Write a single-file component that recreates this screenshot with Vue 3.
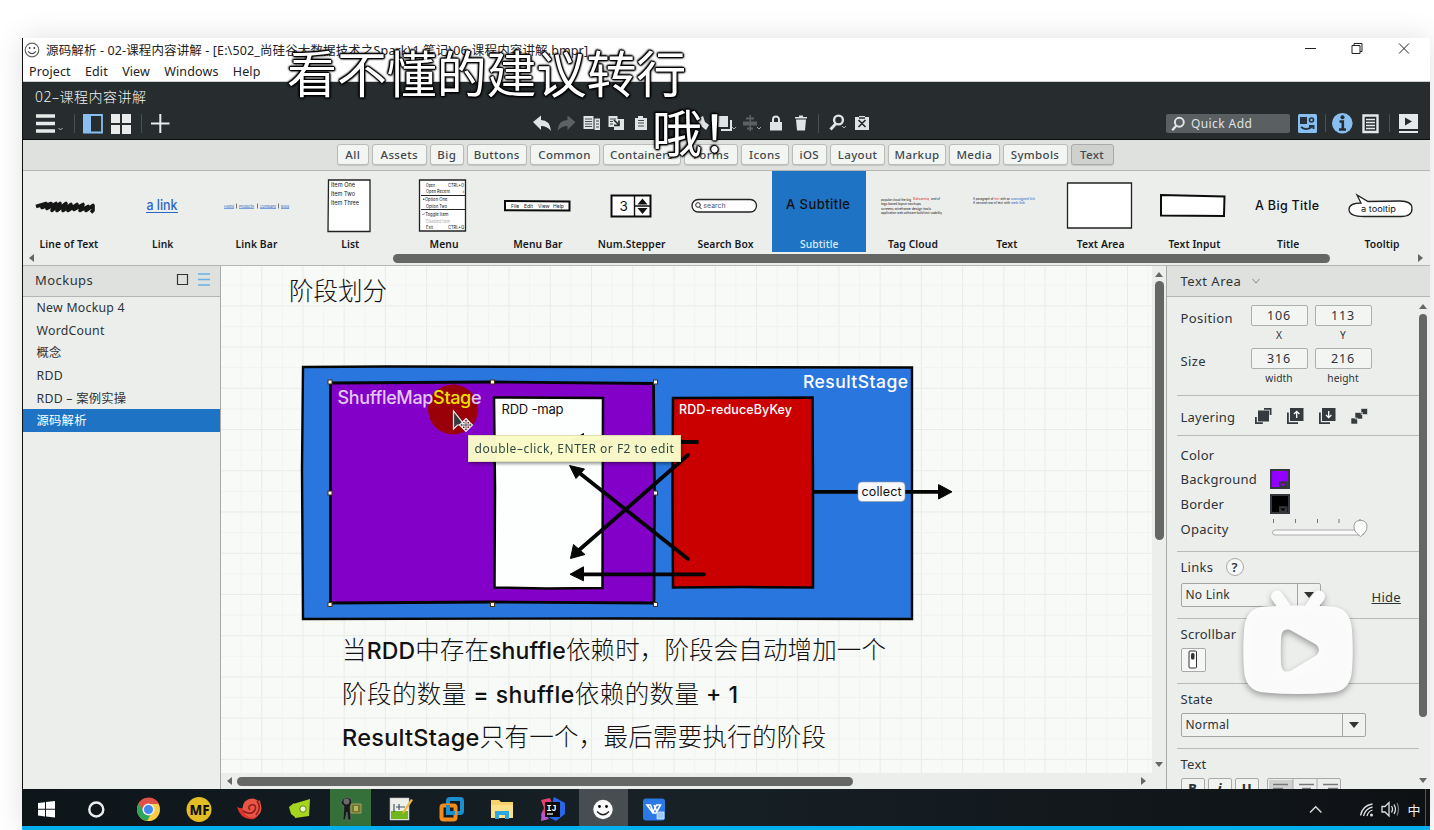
<script setup>
const menus = ['Project', 'Edit', 'View', 'Windows', 'Help']
const categories = [
  ['All', 32.5], ['Assets', 54.5], ['Big', 34.5], ['Buttons', 59.5], ['Common', 70], ['Containers', 78.5],
  ['Forms', 54], ['Icons', 47.5], ['iOS', 35.5], ['Layout', 55], ['Markup', 58], ['Media', 50.5],
  ['Symbols', 65], ['Text', 43],
]
const controls = ['Line of Text', 'Link', 'Link Bar', 'List', 'Menu', 'Menu Bar', 'Num.Stepper', 'Search Box',
  'Subtitle', 'Tag Cloud', 'Text', 'Text Area', 'Text Input', 'Title', 'Tooltip']
const mockups = ['New Mockup 4', 'WordCount', '概念', 'RDD', 'RDD – 案例实操', '源码解析']
const handles = [[330, 382], [492.5, 382], [655.5, 382], [330, 493], [655.5, 493], [330, 604.5], [492.5, 604.5], [655.5, 604.5]]
</script>

<template>
  <div class="page">
    <div class="window">
      <header class="titlebar">
        <svg class="face" viewBox="0 0 16 16"><circle cx="8" cy="8" r="6.8" fill="#fff" stroke="#666" stroke-width="1.2" /><circle cx="5.7" cy="6" r="1" fill="#444" /><circle cx="10.3" cy="6" r="1" fill="#444" /><path d="M4 9.3q4 4.6 8 0" fill="none" stroke="#444" stroke-width="1.1" /></svg>
        <svg class="caption" viewBox="0 0 560 24"><text x="0" y="16.500" textLength="542">源码解析 - 02-课程内容讲解 - [E:\502_尚硅谷大数据技术之Spark\1.笔记\06-课程内容讲解.bmpr]</text></svg>
        <svg class="winbtns" viewBox="1300 38 130 24" fill="none" stroke="#222" stroke-width="1"><path d="M1305 48.5h11M1352 45.500h8v8h-8zM1354 45.500v-2h8v8h-2M1399 43.500l10 10M1409 43.500l-10 10" /></svg>
      </header>
      <nav class="menubar"><span v-for="m in menus" :key="m">{{ m }}</span></nav>

      <section class="dark">
        <div class="doc">02–课程内容讲解</div>
        <div class="tools">
          <svg class="tleft" viewBox="22 110 160 30">
            <path d="M36 116h19M36 123.500h19M36 131h19" stroke="#e8ebea" stroke-width="3.600" />
            <path d="M58.500 128l2 2 2-2" stroke="#bbb" fill="none" />
            <path d="M74.500 114v19M141.500 114v19" stroke="#4b5052" />
            <path d="M84 115h18v17.500H84z" fill="#272c2f" stroke="#89bff0" stroke-width="1.800" /><path d="M83 114h8v19h-8z" fill="#89bff0" />
            <path d="M111 114h9v9h-9zM122 114h9v9h-9zM111 125h9v9h-9zM122 125h9v9h-9z" fill="#e8ebea" />
            <path d="M151 123.500h18.500M160.300 114v19" stroke="#e8ebea" stroke-width="2" />
          </svg>
          <svg class="tmid" viewBox="530 110 344 30">
            <g fill="#e0e4e4">
              <path d="M533 122l8-6.500v4.500q9 0 10 11-4-5-10-5v4z" />
              <path d="M575.500 122l-8-6.500v4.500q-9 0-10 11 4-5 10-5v4z" fill="#5c6163" />
              <path d="M583.500 116h10v13h-10zM594.500 118.500h5.500v11.500h-5.500z" />
              <path d="M608.500 116h9v3h6.500v11h-10v-3h-5.500z" />
              <path d="M635 118h3v-2h5v2h4v12h-12z" />
              <path d="M697 119l6-3 2 6 4 3-3 5-5-4z" />
              <path d="M718 116h10v11h-10z" />
              <path d="M721 129h9v-9h2v11h-11z" />
              <path d="M743 121.500h14v4h-14zM746 117.500h8v2h-8zM747 127.500h6v2h-6zM749.500 115h1.500v16h-1.500z" fill="#5c6163" />
              <path d="M770 122h12v8.500h-12z" />
              <path d="M796 119.500h10l-1 11h-8zM795 117h12v1.500h-12zM799 115.500h4v2h-4z" />
              <path d="M855 117h4v-1h6v1h4v13h-14z" />
            </g>
            <path d="M773 122v-2.500a3 3 0 0 1 6 0v2.500" fill="none" stroke="#e0e4e4" stroke-width="2" />
            <path d="M585 119h7M585 121.500h7M585 124h7M585 126.500h7M596 121h3M596 124h3M596 127h3M610 119h6M610 121.500h3M610 124h3M638 120.500h6M638 123h6M638 126h6" stroke="#353a3d" fill="none" stroke-width=".9" />
            <path d="M614 120l5 5M619 120.500v4.800h-5M858.500 120l7 7M865.500 120l-7 7M859 118h6" stroke="#272c2f" fill="none" stroke-width="1.700" />
            <circle cx="838.500" cy="120" r="4.400" fill="none" stroke="#e0e4e4" stroke-width="2.400" /><path d="M835.500 124l-5 5.500" stroke="#e0e4e4" stroke-width="3" />
            <path d="M732 127l2 2 2-2M757 127l2 2 2-2M842 126l2 2 2-2" fill="none" stroke="#aaa" />
            <path d="M818.500 114v19" stroke="#4b5052" />
          </svg>
          <div class="quick">
            <svg viewBox="0 0 18 18"><circle cx="10.500" cy="7" r="5" fill="none" stroke="#e3e6e6" stroke-width="2.200" /><path d="M7 11l-4.500 5" stroke="#e3e6e6" stroke-width="2.600" /></svg>
            <span>Quick Add</span>
          </div>
          <svg class="tright" viewBox="1296 110 134 30">
            <rect x="1298" y="114" width="19" height="19" rx="1.500" fill="#89bff0" /><path d="M1300 117h7v7h-7z" fill="#26333f" /><circle cx="1311.500" cy="120" r="2" fill="none" stroke="#26333f" stroke-width="1.600" /><path d="M1301 127q6 4.500 11-.5M1309 126h4.500v3" fill="none" stroke="#26333f" stroke-width="1.900" />
            <path d="M1325.500 114v18M1389.500 114v18" stroke="#4b5052" />
            <circle cx="1342.300" cy="123.300" r="10.300" fill="#89bff0" /><path d="M1339.500 121.500h3.300v7.500M1339 129.500h7" stroke="#272c2f" stroke-width="2.600" fill="none" /><circle cx="1342.500" cy="117.300" r="2" fill="#272c2f" />
            <path d="M1363.500 115.500h14v16.500h-14z" fill="none" stroke="#e6e9e9" stroke-width="2.400" /><path d="M1366 119.500h9M1366 122.500h9M1366 125.500h9M1366 128.500h9" stroke="#e6e9e9" stroke-width="1.500" />
            <path d="M1399 114h19v15h-19zM1399 131h19v2h-19z" fill="#e6e9e9" /><path d="M1405 117.500v8l7-4z" fill="#272c2f" />
          </svg>
        </div>
      </section>

      <section class="cats">
        <span v-for="c in categories" :key="c[0]" class="cat" :class="{ on: c[0] === 'Text' }" :style="{ width: c[1] + 'px' }">{{ c[0] }}</span>
      </section>

      <section class="library">
        <div class="items">
          <div v-for="(c, i) in controls" :key="c" class="item" :class="{ sel: i === 8 }">
            <svg class="thumb" viewBox="0 0 94 66">
              <template v-if="i === 0">
                <path d="M14 35.500l10-3-4 4 9-4-4 5 9-5-4 7 8-7-3 7 9-7-3 7 8-6-3 6 9-6-3 5 9-5-3 6 8-4-2 4 7-5v5l-2 2" fill="none" stroke="#161616" stroke-width="3.600" stroke-linejoin="round" />
              </template>
              <template v-else-if="i === 1"><text x="30.500" y="39" font-size="14" font-weight="500" fill="#2a65c4" textLength="31" lengthAdjust="spacingAndGlyphs">a link</text><path d="M30 41.500h32" stroke="#2a65c4" /></template>
              <template v-else-if="i === 2"><g class="tiny"><text x="14" y="36.500" textLength="10" lengthAdjust="spacingAndGlyphs">Home</text><text x="29" y="36.500" textLength="15" lengthAdjust="spacingAndGlyphs">Products</text><text x="50" y="36.500" textLength="16" lengthAdjust="spacingAndGlyphs">Company</text><text x="71" y="36.500" textLength="8" lengthAdjust="spacingAndGlyphs">Blog</text></g><path d="M26.500 32.500v5M47.500 32.500v5M68.500 32.500v5" stroke="#555" stroke-width=".8" /><path d="M14 37.500h10M29 37.500h15M50 37.500h16M71 37.500h8" stroke="#5d8bd3" stroke-width=".8" /></template>
              <template v-else-if="i === 3"><path d="M25.500 9h41.500v51.500h-42z" class="box" /><g font-size="6.200"><text x="28" y="16" textLength="24" lengthAdjust="spacingAndGlyphs">Item One</text><text x="28" y="25" textLength="24" lengthAdjust="spacingAndGlyphs">Item Two</text><text x="28" y="34" textLength="28" lengthAdjust="spacingAndGlyphs">Item Three</text></g></template>
              <template v-else-if="i === 4"><path d="M22.500 9h46v51h-46z" class="box" /><g font-size="4.700"><text x="29" y="15.500" textLength="9" lengthAdjust="spacingAndGlyphs">Open</text><text x="51" y="15.500" textLength="16" lengthAdjust="spacingAndGlyphs">CTRL+O</text><text x="29" y="22" textLength="24" lengthAdjust="spacingAndGlyphs">Open Recent</text><text x="65.500" y="22">›</text><text x="25.500" y="30" textLength="25" lengthAdjust="spacingAndGlyphs">•Option One</text><text x="29" y="36.500" textLength="21" lengthAdjust="spacingAndGlyphs">Option Two</text><text x="24.500" y="45" textLength="27" lengthAdjust="spacingAndGlyphs">✓Toggle Item</text><text x="29" y="51.500" fill="#aaa" textLength="24" lengthAdjust="spacingAndGlyphs">Disabled Item</text><text x="29" y="58" textLength="7" lengthAdjust="spacingAndGlyphs">Exit</text><text x="51" y="58" textLength="16" lengthAdjust="spacingAndGlyphs">CTRL+Q</text></g><path d="M24 24.500h44M24 38.500h44" stroke="#222" /></template>
              <template v-else-if="i === 5"><path d="M14 30l64.500 .5v9l-64.500-.3z" class="box heavy" /><g font-size="5"><text x="20" y="37">File</text><text x="33" y="37">Edit</text><text x="47" y="37">View</text><text x="62" y="37">Help</text></g></template>
              <template v-else-if="i === 6"><path d="M26.500 24.500h39v21h-39z" class="box heavy" /><path d="M49.500 24v22M49.500 35h16" stroke="#111" stroke-width="1.400" /><path d="M52.500 33.500l5-6 5 6zM52.500 37l5 6 5-6z" fill="#111" /><text x="34.500" y="40" font-size="13.500">3</text></template>
              <template v-else-if="i === 7"><rect x="14" y="28.500" width="64.500" height="12.500" rx="6.200" class="box" /><circle cx="20" cy="34" r="2.300" fill="none" stroke="#222" /><path d="M21.500 36l2 2" stroke="#222" /><text x="25.500" y="37" font-size="6.800" fill="#555" textLength="22" lengthAdjust="spacingAndGlyphs">search</text></template>
              <template v-else-if="i === 8"><text x="14" y="38" font-size="13" font-weight="500" textLength="64">A Subtitle</text></template>
              <template v-else-if="i === 9"><g font-size="3.400"><text x="15" y="29.500" textLength="30" lengthAdjust="spacingAndGlyphs">popular cloud the big</text><text x="47" y="29" fill="#d33" textLength="16" lengthAdjust="spacingAndGlyphs">Balsamiq</text><text x="65" y="29" textLength="9" lengthAdjust="spacingAndGlyphs">and of</text><text x="15" y="34" textLength="40" lengthAdjust="spacingAndGlyphs">tags based layout mockups</text><text x="15" y="38.500" textLength="50" lengthAdjust="spacingAndGlyphs">screens wireframe design tools</text><text x="15" y="43" textLength="61" lengthAdjust="spacingAndGlyphs">application web software build text usability</text></g></template>
              <template v-else-if="i === 10"><g font-size="3.200"><text x="13" y="29" textLength="37" lengthAdjust="spacingAndGlyphs">A paragraph of <tspan fill="#d33">text</tspan> with an</text><text x="51" y="29" fill="#2a65c4" textLength="24" lengthAdjust="spacingAndGlyphs">unassigned link</text><text x="13" y="33" textLength="37" lengthAdjust="spacingAndGlyphs">A second row of text with</text><text x="51" y="33" fill="#2a65c4" textLength="14" lengthAdjust="spacingAndGlyphs">web link</text></g></template>
              <template v-else-if="i === 11"><path d="M13.500 12h64v45h-64z" class="box" /></template>
              <template v-else-if="i === 12"><path d="M14 24l63.500 1.500-.5 19.500-63-.5z" class="box heavy" /></template>
              <template v-else-if="i === 13"><text x="14" y="39" font-size="12.500" font-weight="500" textLength="64">A Big Title</text></template>
              <template v-else><path d="M26 32c-8 0-12 2-12 6.500 0 6 8 7 15 7h37c7 0 11-2 11-8 0-6-5-7.500-12-7.500l-32 .5-11-6.500z" class="box" /><text x="26" y="40.500" font-size="8" textLength="35" lengthAdjust="spacingAndGlyphs">a tooltip</text></template>
            </svg>
            <span class="label">{{ c }}</span>
          </div>
        </div>
        <div class="libscroll"><i class="al"></i><b></b><i class="ar"></i></div>
      </section>

      <main class="main">
        <aside class="left">
          <div class="lhead"><span>Mockups</span>
            <svg viewBox="0 0 36 16"><path d="M1.500 2.500h10v10h-10z" fill="none" stroke="#333" stroke-width="1.200" /><path d="M22 2h12M22 7.500h12M22 13h12" stroke="#6aaee6" stroke-width="1.400" /></svg>
          </div>
          <div v-for="(m, i) in mockups" :key="m" class="mock" :class="{ active: i === 5 }">{{ m }}</div>
        </aside>

        <section class="canvas">
          <div class="canvasrow">
            <svg class="board" viewBox="221 266 931 507">
              <defs><pattern id="grid" patternUnits="userSpaceOnUse" x="261.200" y="387.800" width="41.230" height="41.230"><path d="M.5 0v41.230M0 .5h41.230" stroke="#e9ebe9" /><path d="M21 0v41.230M0 21h41.230" stroke="#f1f3f1" /></pattern></defs>
              <rect x="221" y="266" width="931" height="507" fill="#f8faf8" /><rect x="221" y="266" width="931" height="507" fill="url(#grid)" />
              <text class="serif" x="289" y="300" font-size="24.500" textLength="98">阶段划分</text>
              <path d="M303 367l85-.5 524 1v251.500l-300-.5-309 .5-1-150z" fill="#2a76df" stroke="#050505" stroke-width="2.400" />
              <path d="M330.500 383l160-1 163 1.500 1 110-.5 109.500-163-1-160.500 1v-110z" fill="#8200c8" stroke="#050505" stroke-width="2.800" />
              <circle cx="453" cy="409.500" r="25" fill="#990007" />
              <text x="337.500" y="404" font-size="18" fill="#e3c7f2" textLength="144">ShuffleMap<tspan fill="#ede000">Stag</tspan>e</text>
              <path d="M494 397.500l109 .5-.5 190-56 .5-52-1 .5-100z" fill="#fdfefe" stroke="#050505" stroke-width="2.500" />
              <text x="501.500" y="414" font-size="13" class="reg" textLength="62">RDD -map</text>
              <path d="M673 398l139.500-.5.500 90v100l-70-.5-70 .5-.5-100z" fill="#ca0000" stroke="#050505" stroke-width="2.500" />
              <text x="679" y="414" font-size="12.500" fill="#fff" textLength="113">RDD-reduceByKey</text>
              <text x="803" y="387.500" font-size="17.500" fill="#fff" textLength="105">ResultStage</text>
              <g stroke="#050505" stroke-width="3.800" stroke-linecap="round"><path d="M580 442h117M688 455L578 551M688 559L577 471M584 574.300h120M814 491.800h126" /></g>
              <path d="M570.500 441.500l13-8v14zM569.500 465.500l15 3.500-8.500 9.500zM570.500 558.500l3-14 11.500 10zM570 574.300l13.500-7.500v14zM952 491.800l-13.500-7.200v14.400z" fill="#050505" stroke="#050505" stroke-linejoin="round" />
              <rect x="858" y="482" width="47" height="19.500" rx="4" fill="#f7f9ff" stroke="#9a9a9a" stroke-width=".6" /><text x="861.500" y="496" font-size="12.500" class="reg" textLength="40">collect</text>
              <rect v-for="(h, i) in handles" :key="i" :x="h[0] - 2" :y="h[1] - 2" width="4" height="4" fill="#fff" stroke="#4a3010" />
              <path d="M453.500 411v18l4-4h7z" fill="#343a40" stroke="#eee" stroke-width="1.200" /><path d="M466 418.500l3 3h-2v2.500h2.500v-2l3 3-3 3v-2H467v2.500h2l-3 3-3-3h2V426h-2.500v2l-3-3 3-3v2h2.500v-2.500h-2z" fill="#555" stroke="#eee" stroke-width="1.100" />
              <g class="mix" font-size="24.500">
                <text x="342" y="659" textLength="544">当<tspan class="lat">RDD</tspan>中存在<tspan class="lat">shuffle</tspan>依赖时，阶段会自动增加一个</text>
                <text x="342" y="703" textLength="396">阶段的数量<tspan class="lat"> = shuffle</tspan>依赖的数量<tspan class="lat"> + 1</tspan></text>
                <text x="342" y="745.500" textLength="484"><tspan class="lat wide">ResultStage</tspan>只有一个，最后需要执行的阶段</text>
              </g>
            </svg>
            <div class="vscroll"><i class="au"></i><b></b><i class="ad"></i></div>
            <div class="tip">double–click, ENTER or F2 to edit</div>
          </div>
          <div class="hscroll"><i class="al"></i><b></b><i class="ar"></i></div>
        </section>

        <aside class="props">
          <div class="phead">Text Area <svg viewBox="0 0 10 8"><path d="M1.500 2l3.500 4 3.500-4" fill="none" stroke="#888" /></svg></div>
          <div class="pbody">
            <div class="sheet">
              <div class="dims"><label>Position</label><div class="dim"><span class="inp">106</span><small>X</small></div><div class="dim"><span class="inp">113</span><small>Y</small></div></div>
              <div class="dims second"><label>Size</label><div class="dim"><span class="inp">316</span><small>width</small></div><div class="dim"><span class="inp">216</span><small>height</small></div></div>
              <div class="row sep layering"><label>Layering</label>
                <svg viewBox="1254 407 114 20" fill="#343a3e"><path d="M1258 410.500h11v11h-11zM1264 408h7.500v7h-1.800v-5.200H1264zM1255 417h1.800v5.200h6v1.800H1255z" /><path d="M1290 408h13.500v13H1290zM1287 412.500h1.800v9.700h9.200v1.800h-11zM1322 408h13.500v13H1322zM1319 412.500h1.800v9.700h9.200v1.800h-11z" /><path d="M1296.700 418v-6.500M1294 414l2.700-2.700 2.700 2.700M1328.700 411v6.500M1326 415l2.700 2.700 2.700-2.700" fill="none" stroke="#fff" stroke-width="1.300" /><path d="M1351 418h6.500v6H1351zM1355 412.500h7.500v6.500H1355zM1361 408.500h6.500v6H1361z" stroke="#eceeec" stroke-width=".6" /></svg>
              </div>
              <div class="row sep color"><label>Color</label></div>
              <div class="row r25"><label>Background</label><span class="sw purple"><em></em></span></div>
              <div class="row r25"><label>Border</label><span class="sw"><em></em></span></div>
              <div class="row r25"><label>Opacity</label><svg class="slider" viewBox="1268 515 100 26"><path d="M1273.500 518v4M1295.500 518v4M1317.500 518v4M1339 518v4M1360 518v4" stroke="#777" /><rect x="1272.500" y="529" width="92" height="5" rx="2.500" fill="#fafafa" stroke="#aaa" /><path d="M1360.500 519.500c4 0 6.500 2 6.500 6 0 5-3 7-6.500 10-3.500-3-6.500-5-6.500-10 0-4 2.500-6 6.500-6z" fill="#fbfbfb" stroke="#999" /></svg></div>
              <div class="row sep links"><label>Links</label><span class="help">?</span></div>
              <div class="row linkrow"><div class="combo c1"><span>No Link</span><i></i></div><a>Hide</a></div>
              <div class="row sep sbl"><label>Scrollbar</label></div>
              <div class="row sbrow"><span class="sbtn"><svg viewBox="0 0 10 20"><rect x="1" y="1" width="7.500" height="17" rx="1" fill="#fff" stroke="#333" /><rect x="3" y="3" width="3.500" height="6.500" rx="1.500" fill="#333" /></svg></span></div>
              <div class="row sep sbl"><label>State</label></div>
              <div class="row staterow"><div class="combo c2"><span>Normal</span><i></i></div></div>
              <div class="row sep sbl textl"><label>Text</label></div>
              <div class="row fmt"><span>B</span><span class="it">i</span><span>U</span><div class="aligns"><svg viewBox="0 0 74 22"><path d="M1 1h24v22H1z" fill="#cfd1cf" /><path d="M25 0v22M49 0v22" stroke="#aaa" /><path d="M5 5.500h15M5 9.500h10M31 5.500h15M34 9.500h9M55 5.500h15M60 9.500h10" stroke="#777" stroke-width="1.600" /></svg></div></div>
            </div>
            <div class="pscroll"><i class="au"></i><b></b><i class="ad"></i></div>
          </div>
        </aside>
      </main>

      <footer class="taskbar">
        <svg viewBox="22 789 1408 37">
          <defs><linearGradient id="tb"><stop offset="0" stop-color="#0d1519" /><stop offset=".45" stop-color="#172126" /><stop offset="1" stop-color="#0e1114" /></linearGradient></defs>
          <path d="M22 789h1408v37H22z" fill="url(#tb)" />
          <path d="M330 789h41v37h-41z" fill="#35703a" /><path d="M579 789h49v37h-49z" fill="#474d50" />
          <path d="M38 803l7-.8v6.500h-7zM46 802l9-1v7.700h-9zM38 809.800h7v6.600l-7-.8zM46 809.800h9v7.700l-9-1z" fill="#fff" />
          <circle cx="96.300" cy="809.500" r="7" fill="none" stroke="#eee" stroke-width="2.400" />
          <circle cx="148.500" cy="809.500" r="11.500" fill="#f9cc45" /><path d="M138.500 803.700a11.500 11.500 0 0 0 8.500 17.200l5.500-9.400-4-2z" fill="#2ca45b" /><path d="M138.500 803.700a11.500 11.500 0 0 1 20.500 .3h-10.500q-5 1-5.500 6z" fill="#df5146" /><circle cx="148.500" cy="809.500" r="5.300" fill="#4286ef" stroke="#eee" stroke-width="1.500" />
          <circle cx="199" cy="809.500" r="12.500" fill="#e3bd26" /><text x="189.500" y="815" font-size="14.500" font-weight="800" fill="#111" textLength="20" lengthAdjust="spacingAndGlyphs">MF</text>
          <path d="M237 807q6 3 11-1l12-6q3 14-6 19-13 2-17-12z" fill="#d8352e" /><circle cx="252" cy="808" r="9.500" fill="#e85545" /><path d="M243 811q8 5 12-1 2-6-4-5-4 2-1 5M257 801q5 7-1 14" fill="none" stroke="#8c1f1c" stroke-width="1.500" />
          <path d="M289 807l5-4 1 14-4-3zM293 804l17-5-1 17-14 2z" fill="#a6d51d" /><circle cx="303" cy="809" r="3.200" fill="#eff8d0" stroke="#5f8715" />
          <path d="M343 799q4-3 8 0l1 5-2 3 1 13h-3l-1-8-2 8h-2l1-14-3-3z" fill="#17191a" stroke="#6d7470" stroke-width=".6" /><circle cx="346.500" cy="801.500" r="3" fill="#666c6a" /><path d="M351 804h10v9h-10z" fill="#70742f" stroke="#a3a35e" /><path d="M354 806h4v5h-4z" fill="#b4b65c" />
          <path d="M390 798h19v22h-19z" fill="#edf0e8" stroke="#bbb" stroke-width=".6" /><path d="M391 811h17v8h-17z" fill="#71b51f" /><path d="M394 804v8M396 807h9M399 804v6" stroke="#456" stroke-width="1.200" /><path d="M411 799l-8 12-1 3 3-2 8-12z" fill="#f2b73a" />
          <g fill="none" stroke-width="4"><rect x="448" y="799" width="14" height="14" rx="2" stroke="#1c90cf" /><rect x="441.500" y="805.500" width="14" height="14" rx="2" stroke="#f08b1c" /><path d="M448 805v8h7" stroke="#1c90cf" /></g>
          <path d="M491 800h8l2 2h12v16h-22z" fill="#f6d36d" /><path d="M491 805h22v13h-22z" fill="#fce18b" /><path d="M495 811h14v8h-4v-4h-6v4h-4z" fill="#2da7df" />
          <path d="M541 800l9-2 4 10-8 12-5-5 3-7z" fill="#e54072" /><path d="M554 797l11 6v11l-9 7-8-4z" fill="#2a66e8" /><path d="M542 811l7 8-8 2z" fill="#b458cc" /><path d="M545 802h15v15h-15z" fill="#090909" /><text x="546.500" y="810.500" font-size="8.500" font-weight="700" fill="#fff" class="mono">IJ</text><path d="M547 814h6" stroke="#fff" stroke-width="1.200" />
          <circle cx="603" cy="809.500" r="9.700" fill="#fafafa" /><circle cx="599.500" cy="806.500" r="1.400" /><circle cx="606.500" cy="806.500" r="1.400" /><path d="M597 811.500q6 6.500 12 0" fill="none" stroke="#222" stroke-width="1.300" />
          <rect x="643" y="798.500" width="22" height="22" rx="3" fill="#2b79e5" /><path d="M647 805h3.500l2.500 7 3.500-7h4l-4.500 8h-3zM654 805l3 7" fill="none" stroke="#fff" stroke-width="1.600" /><path d="M657 812h7v7h-7z" fill="#9ec6fa" stroke="#e0eeff" stroke-width=".7" />
          <path d="M1310 812.500l5.700-5.700 5.700 5.700" fill="none" stroke="#ddd" stroke-width="1.400" />
          <g fill="none" stroke="#ddd" stroke-width="1.300"><path d="M1360.500 815.500q2-10 12-11.500M1363.500 816q2-7.500 9-9M1367 816q1-4.500 5.500-6" /><path d="M1382 806.500h3l4-4v13.500l-4-4h-3zM1391.500 806q2 3 0 6.500M1394 804.500q3 5 0 9.500" /><path d="M1397 803q3 6 0 12.500" stroke="#777" /></g><circle cx="1371.500" cy="815" r="1.500" fill="#ddd" />
          <text x="1407.500" y="814.500" font-size="13" fill="#eee" class="cjk">中</text><path d="M1425.500 789v37" stroke="#555" />
        </svg>
      </footer>
      <div class="progress"></div>
    </div>

    <div class="danmaku d1">看不懂的建议转行</div>
    <div class="danmaku d2">哦！</div>
    <svg class="tv" viewBox="1234 582 130 126">
      <defs><mask id="hole"><path d="M1230 570h140v140h-140z" fill="#fff" /><path d="M1284 630.500q4-2 8 .5l24 13.500q6 5.500 0 11l-24 14.500q-4 2.500-8 1-2.500-2-3-7-.5-13 0-26 .5-6 3-7.500z" fill="#000" /></mask></defs>
      <g fill="#fcfcfc" opacity=".98" mask="url(#hole)"><path d="M1277 596.500l8 11M1319 596.500l-8 11" stroke="#fcfcfc" stroke-width="12" stroke-linecap="round" /><path d="M1265 606.500q33-2 66 0 20 1 21 24 1.500 20 0 39-1 22-21 23-33 3-66 0-20-1-21-23-1.500-19 0-39 1-23 21-24z" /></g>
    </svg>
  </div>
</template>

<style>
html, body { margin: 0; overflow: hidden; background: #fdfdfd; }
</style>
<style scoped>
* { box-sizing: border-box; }
.page { position: relative; width: 1434px; height: 830px; padding: 38px 4px 0 22px; background: #fff; font-family: "Noto Sans", "Noto Sans CJK SC", sans-serif; color: #2d3438; overflow: hidden; font-size: 13px; }
.window { width: 1408px; height: 792px; display: flex; flex-direction: column; box-shadow: 0 0 28px rgba(0,0,0,.12); background: #eceeec; border-left: 1px solid #111; }
svg { display: block; flex: none; overflow: hidden; }
.titlebar { height: 24px; background: #fefffe; display: flex; align-items: center; flex: none; }
.face { width: 16px; height: 16px; margin-left: 1px; }
.caption { width: 560px; height: 24px; margin-left: 6px; font: 12.5px "Noto Sans", "Noto Sans CJK SC", sans-serif; fill: #222; }
.winbtns { width: 130px; height: 24px; margin-left: auto; }
.menubar { height: 20px; flex: none; background: #fefffe; display: flex; gap: 14.300px; padding-left: 6px; line-height: 20px; font-size: 12.5px; color: #222; letter-spacing: .12px; border-bottom: 1px solid #ccc; }
.dark { height: 58px; flex: none; background: #272c2f; border-bottom: 1px solid #0b0c0d; }
.doc { height: 28px; padding-left: 12px; line-height: 30px; font-size: 14px; font-weight: 300; letter-spacing: .5px; color: #f0f2f2; }
.tools { display: flex; height: 30px; align-items: flex-start; }
.tleft { width: 160px; height: 30px; margin-left: -1px; }
.tmid { width: 344px; height: 30px; margin-left: 348px; }
.quick { width: 124px; height: 19px; margin: 4px 6px 0 292px; background: #5a5f62; border-radius: 2px; color: #dfe3e3; display: flex; align-items: center; gap: 5px; padding-left: 4px; font-size: 12px; letter-spacing: .4px; }
.quick svg { width: 16px; height: 16px; }
.tright { width: 134px; height: 30px; }
.cats { height: 31px; flex: none; display: flex; gap: 3px; padding: 4px 0 0 313.500px; background: #dfe1df; border-bottom: 1px solid #b4b6b4; }
.cat { height: 21px; flex: none; line-height: 20px; text-align: center; border: 1px solid #babcba; border-radius: 3px; background: #f3f5f3; box-shadow: 0 1px 1px #c3c5c3; font-size: 11.500px; font-weight: 500; color: #41494e; letter-spacing: .35px; white-space: nowrap; }
.cat.on { background: #cfd1cf; border-color: #aaa; }
.library { height: 95px; flex: none; border-bottom: 1px solid #b4b6b4; background: #eceeec; }
.items { display: grid; grid-template-columns: repeat(15, 93.800px); height: 80px; margin-left: -1px; }
.item { display: flex; flex-direction: column; align-items: center; }
.item.sel { background: #1f73c4; }
.thumb { width: 94px; height: 66px; font-family: Inter, sans-serif; fill: #111; }
.box { fill: #fff; stroke: #222; stroke-width: 1.300px; }
.heavy { stroke: #0c0c0c; stroke-width: 2px; }
.tiny { font-size: 4px; fill: #2a65c4; }
.label { font-size: 10.300px; font-weight: 600; line-height: 15px; letter-spacing: .1px; color: #15191c; white-space: nowrap; }
.sel .label { color: #dceaf7; font-weight: 500; }
.libscroll { height: 14px; display: flex; align-items: center; padding: 0 7px 0 6px; justify-content: space-between; }
.libscroll b { width: 937px; height: 9px; border-radius: 5px; background: #656765; margin-left: 359px; margin-right: auto; }
i { display: block; width: 0; height: 0; flex: none; }
.al { border: 4px solid transparent; border-right: 5px solid #666; border-left: 0; }
.ar { border: 4px solid transparent; border-left: 5px solid #666; border-right: 0; }
.au { border: 4px solid transparent; border-bottom: 5px solid #666; border-top: 0; }
.ad { border: 4px solid transparent; border-top: 5px solid #666; border-bottom: 0; }
.main { height: 523px; flex: none; display: flex; }
.left { width: 198px; border-right: 1px solid #aaa; background: #eceeec; }
.lhead { height: 31px; margin-bottom: -1px; background: #dfe1df; border-bottom: 1px solid #b4b6b4; display: flex; align-items: center; justify-content: space-between; padding: 0 8px 2px 12px; font-size: 13px; letter-spacing: .45px; }
.lhead svg { width: 36px; height: 16px; }
.mock { height: 22.700px; line-height: 23px; padding-left: 13.500px; font-size: 12.300px; letter-spacing: .25px; }
.mock.active { background: #1f73c4; color: #fff; }
.canvas { width: 945px; display: flex; flex-direction: column; }
.canvasrow { position: relative; display: flex; height: 507px; }
.board { width: 931px; height: 507px; font-family: Inter, "Noto Sans CJK SC", sans-serif; font-weight: 500; fill: #111; }
.reg { font-weight: 400; }
.serif { font-family: "Noto Sans CJK SC"; font-weight: 300; }
.mix { font-family: "Noto Sans CJK SC"; font-weight: 300; }
.lat { font-family: Inter, sans-serif; font-size: 23px; font-weight: 500; }
.wide { font-size: 23.500px; }
.vscroll { width: 14px; background: #eceeec; display: flex; flex-direction: column; align-items: center; padding: 6px 0; }
.vscroll b { width: 9px; height: 259px; border-radius: 5px; background: #656765; margin: 4px 0 auto; }
.hscroll { height: 16px; background: #eceeec; display: flex; align-items: center; padding: 0 20px 0 6px; }
.hscroll b { width: 616px; height: 9px; border-radius: 5px; background: #656765; margin: 0 auto 0 5px; }
.tip { position: absolute; left: 247px; top: 169px; width: 213px; height: 27px; line-height: 25px; text-align: center; background: #fafbc8; color: #2f4a42; border: 1px solid #e0e0b0; box-shadow: 1px 2px 3px rgba(0,0,0,.4); font-size: 12px; letter-spacing: .5px; white-space: nowrap; opacity: .98; }
.props { width: 264px; border-left: 1px solid #aaa; background: #eceeec; overflow: hidden; }
.phead { height: 31px; background: #dfe1df; border-bottom: 1px solid #b4b6b4; padding: 0 0 1px 13.500px; font-size: 13px; letter-spacing: .5px; display: flex; align-items: center; gap: 10px; }
.phead svg { width: 10px; height: 8px; }
.pbody { display: flex; height: 492px; }
.sheet { width: 252px; height: 492px; overflow: hidden; padding-left: 10px; }
.pscroll { width: 8px; display: flex; flex-direction: column; align-items: center; padding: 7px 0 6px; }
.pscroll b { width: 8px; flex: none; height: 403px; border-radius: 5px; background: #656765; margin: 5px 0 auto; }
.dims { display: flex; height: 43px; padding: 8px 0 0 3.500px; gap: 7px; }
.dims label { width: 63px; padding-top: 4px; letter-spacing: .4px; }
.dims.second { height: 55px; }
.dim { width: 57px; text-align: center; }
.inp { display: block; height: 21px; line-height: 19px; border: 1px solid #aeb0ae; border-radius: 2px; background: #f3f5f3; font-size: 12.500px; letter-spacing: .8px; }
.dim small { display: block; font-size: 10.200px; line-height: 18px; letter-spacing: .1px; }
.row { display: flex; align-items: center; padding-left: 3.500px; letter-spacing: .25px; }
.row label { flex: none; width: 70px; }
.sep { border-top: 1px solid #b9bbb9; }
.layering { height: 40px; padding-top: 2px; }
.layering svg { width: 114px; height: 20px; margin-left: 3.500px; }
.color { height: 32px; padding-top: 7px; }
.r25 { height: 24.800px; }
.r25 label { width: 89px; }
.sw { width: 20px; height: 20px; background: #000; border: 2px solid #34383c; display: flex; align-items: flex-end; justify-content: flex-end; }
.sw em { width: 9px; height: 6px; background: #34383c; clip-path: polygon(0 0, 100% 0, 100% 100%, 0 100%, 0 30%, 20% 40%, 50% 80%, 80% 40%, 0 40%); }
.sw.purple { background: #9300ff; }
.slider { width: 100px; height: 26px; margin-left: -1.500px; }
.links { height: 32px; margin-top: 9.500px; }
.links label { width: 45px; }
.help { width: 18px; height: 18px; border: 1px solid #aaa; border-radius: 50%; background: #f7f7f7; text-align: center; line-height: 16px; font-weight: 600; }
.linkrow { height: 35.500px; align-items: flex-start; }
.combo { display: flex; height: 24px; border: 1px solid #a4a6a4; background: #f0f2f0; border-radius: 2px; font-size: 12px; line-height: 22px; justify-content: space-between; align-items: center; }
.combo span { padding-left: 4px; flex: 1; border-right: 1px solid #a4a6a4; }
.combo i { border: 5px solid transparent; border-top: 6px solid #333; border-bottom: 0; margin: 0 6px; }
.c1 { width: 140px; }
.c2 { width: 185px; }
.linkrow a { text-decoration: underline; margin: 5px 0 0 51px; }
.sbl { height: 30px; }
.sbrow { height: 35px; align-items: flex-start; }
.sbtn { width: 25px; height: 24px; border: 1px solid #aaa; border-radius: 2px; background: #f5f6f5; display: flex; justify-content: center; align-items: center; }
.sbtn svg { width: 10px; height: 20px; }
.staterow { height: 35px; align-items: flex-start; }
.fmt { align-items: flex-start; gap: 2.500px; }
.fmt > span { width: 24.500px; height: 24px; border: 1px solid #aaa; border-radius: 2px; text-align: center; font-weight: 800; line-height: 18px; background: #f1f3f1; }
.fmt .it { font-style: italic; }
.aligns { width: 74px; height: 24px; border: 1px solid #aaa; border-radius: 2px; margin-left: 5px; overflow: hidden; }
.aligns svg { width: 74px; height: 22px; }
.taskbar { height: 37px; flex: none; margin-left: -1px; }
.taskbar svg { width: 1408px; height: 37px; }
.mono { font-family: "Liberation Mono", monospace; }
.cjk { font-family: "Noto Sans CJK SC", sans-serif; }
.progress { height: 4px; margin-left: -1px; background: #02aeec; flex: none; }
.danmaku { position: absolute; font: 400 50px/50px "Noto Sans CJK SC", sans-serif; color: #fff; white-space: nowrap; text-shadow: 1px 0 1px #000, -1px 0 1px #000, 0 1px 1px #000, 0 -1px 1px #000, 1px 1px 2px #000, -1px -1px 2px #000, 0 0 3px #000, 0 0 3px #000; letter-spacing: -.1px; }
.d1 { left: 287px; top: 46px; }
.d2 { left: 652px; top: 105px; }
.tv { position: absolute; left: 1234px; top: 582px; width: 130px; height: 126px; filter: drop-shadow(0 3px 3px rgba(0,0,0,.35)); }
</style>
